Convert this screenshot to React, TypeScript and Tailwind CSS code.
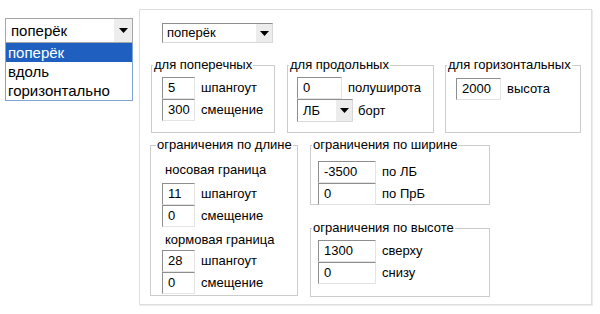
const Arrow = () => (
  <svg width="9" height="5" viewBox="0 0 9 5">
    <polygon points="0,0 9,0 4.5,5" fill="#000" />
  </svg>
);

const Box = ({ value, w }: { value: string; w: string }) => (
  <div
    className={`h-[22px] ${w} border border-t-[#8e8e8e] border-l-[#8e8e8e] border-r-[#e4e4e4] border-b-[#e4e4e4] bg-white pl-[5px] leading-[20px]`}
  >
    {value}
  </div>
);

const Row = ({ value, label, w }: { value: string; label: string; w: string }) => (
  <div className="flex items-center gap-[6px]">
    <Box value={value} w={w} />
    <span>{label}</span>
  </div>
);

const Legend = ({ children, wide }: { children: string; wide?: boolean }) => (
  <legend className={`${wide ? 'ml-[5px]' : 'ml-[1px]'} whitespace-nowrap px-[1px] leading-[14px]`}>
    {children}
  </legend>
);

export default function App() {
  return (
    <div className="flex h-[314px] w-[600px] bg-white font-['Liberation_Sans',Arial,sans-serif] text-[13px] text-black">
      {/* left: open select */}
      <div className="relative w-[139px] shrink-0">
        <div className="ml-[5px] mt-[18px] flex h-[25px] w-[128px] items-stretch border border-[#a6a6a6] bg-white text-[15px]">
          <span className="flex-1 pl-[5px] leading-[23px]">поперёк</span>
          <span className="flex w-[18px] items-center justify-center bg-[#ededed]">
            <Arrow />
          </span>
        </div>
        <ul className="absolute left-[5px] top-[43px] w-[128px] border-b border-l border-r border-[#7fa4d6] bg-white text-[15px] leading-[19px]">
          <li className="bg-[#1e5fbf] pl-[2px] text-white">поперёк</li>
          <li className="pl-[2px]">вдоль</li>
          <li className="pl-[2px]">горизонтально</li>
        </ul>
      </div>

      {/* right: settings panel */}
      <div className="mt-[9px] h-[296px] w-[453px] border border-[#dedede] shadow-[1px_1px_0_0_#ececec]">
        <div className="ml-[22px] mt-[13px] flex h-[20px] w-[111px] items-stretch border border-t-[#8e8e8e] border-l-[#8e8e8e] border-r-[#d8d8d8] border-b-[#d8d8d8] bg-white">
          <span className="flex-1 pl-[4px] leading-[18px]">поперёк</span>
          <span className="flex w-[16px] items-center justify-center bg-[#ececec]">
            <Arrow />
          </span>
        </div>

        <div className="ml-[11px] mt-[15px] flex">
          <fieldset className="h-[75px] w-[124px] border border-[#cccccc]">
            <Legend>для поперечных</Legend>
            <div className="pl-[10px] pt-[5px]">
              <Row value="5" label="шпангоут" w="w-[33px]" />
              <Row value="300" label="смещение" w="w-[33px]" />
            </div>
          </fieldset>
          <fieldset className="ml-[12px] h-[75px] w-[147px] border border-[#cccccc]">
            <Legend>для продольных</Legend>
            <div className="pl-[9px] pt-[5px]">
              <Row value="0" label="полуширота" w="w-[45px]" />
              <div className="flex items-center gap-[5px]">
                <div className="flex h-[23px] w-[56px] items-stretch border border-t-[#8e8e8e] border-l-[#8e8e8e] border-r-[#d8d8d8] border-b-[#d8d8d8] bg-white">
                  <span className="flex-1 pl-[5px] leading-[21px]">ЛБ</span>
                  <span className="flex w-[16px] items-center justify-center bg-[#ececec]">
                    <Arrow />
                  </span>
                </div>
                <span>борт</span>
              </div>
            </div>
          </fieldset>
          <fieldset className="ml-[11px] h-[75px] w-[136px] border border-[#cccccc]">
            <Legend>для горизонтальных</Legend>
            <div className="pl-[10px] pt-[6px]">
              <Row value="2000" label="высота" w="w-[45px]" />
            </div>
          </fieldset>
        </div>

        <div className="ml-[10px] mt-[5px] flex">
          <fieldset className="h-[158px] w-[148px] border border-[#cccccc]">
            <Legend wide>ограничения по длине</Legend>
            <div className="pl-[11px] pt-[10px]">
              <div className="ml-[3px] leading-[16px]">носовая граница</div>
              <div className="mt-[5px]">
                <Row value="11" label="шпангоут" w="w-[33px]" />
                <Row value="0" label="смещение" w="w-[33px]" />
              </div>
              <div className="ml-[3px] mt-[5px] leading-[16px]">кормовая граница</div>
              <div className="mt-[2px]">
                <Row value="28" label="шпангоут" w="w-[33px]" />
                <Row value="0" label="смещение" w="w-[33px]" />
              </div>
            </div>
          </fieldset>

          <div className="ml-[12px] flex flex-col">
            <fieldset className="h-[67px] w-[180px] border border-[#cccccc]">
              <Legend>ограничения по ширине</Legend>
              <div className="pl-[7px] pt-[9px]">
                <Row value="-3500" label="по ЛБ" w="w-[58px]" />
                <Row value="0" label="по ПрБ" w="w-[58px]" />
              </div>
            </fieldset>
            <fieldset className="mt-[16px] h-[76px] w-[180px] border border-[#cccccc]">
              <Legend>ограничения по высоте</Legend>
              <div className="pl-[7px] pt-[5px]">
                <Row value="1300" label="сверху" w="w-[58px]" />
                <Row value="0" label="снизу" w="w-[58px]" />
              </div>
            </fieldset>
          </div>
        </div>
      </div>
    </div>
  );
}
